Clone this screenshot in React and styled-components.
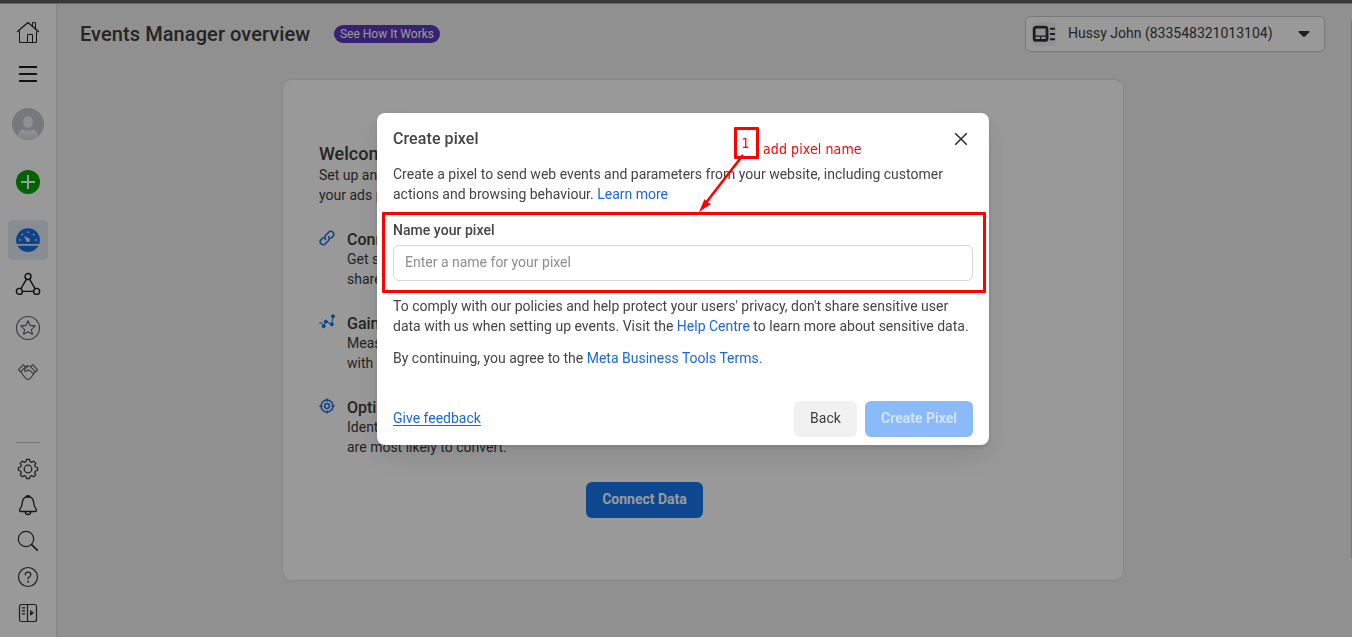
import React from "react";
import styled, { createGlobalStyle } from "styled-components";

const Global = createGlobalStyle`
  * { box-sizing: border-box; }
  html, body { margin: 0; height: 100%; overflow: hidden; }
  body {
    font-family: Roboto, "Liberation Sans", sans-serif;
    font-size: 14px;
    line-height: 20px;
    color: #1c2b33;
  }
  svg { display: block; flex: none; overflow: visible; }
  p, h1, h2, h3 { margin: 0; }
`;

const Page = styled.div`
  height: 637px;
  display: flex;
  flex-direction: column;
  background: #f1f1f1;
  color: #3c3c3c;
`;
const BrowserEdge = styled.div`
  height: 4px;
  flex: none;
  background: #5e5e5e;
  border-bottom: 1px solid #a8a8a8;
`;
const Shell = styled.div`
  flex: 1;
  display: flex;
  min-height: 0;
`;
const Sidebar = styled.nav`
  width: 57px;
  flex: none;
  padding-top: 17px;
  background: #fff;
  border-right: 1px solid #dadada;
  display: flex;
  flex-direction: column;
  align-items: center;
`;
const NavItem = styled.div`
  width: ${(p) => p.$size || 24}px;
  height: ${(p) => p.$size || 24}px;
  margin-top: ${(p) => p.$gap || 0}px;
  flex: none;
  display: flex;
  align-items: center;
  justify-content: center;
  border-radius: 4px;
  background: ${(p) => (p.$active ? "#e3ebf7" : "transparent")};
`;
const NavRule = styled.div`
  width: 24px;
  height: 1px;
  flex: none;
  margin-top: 58px;
  background: #c8c8c8;
`;
const Main = styled.main`
  flex: 1;
  min-width: 0;
  display: flex;
  flex-direction: column;
  align-items: flex-start;
`;
const Header = styled.header`
  width: 100%;
  height: 76px;
  flex: none;
  display: flex;
  align-items: flex-start;
  padding: 12px 27px 0 23px;
`;
const PageTitle = styled.h1`
  font-size: 20px;
  line-height: 36px;
  font-weight: 500;
  letter-spacing: 0.08px;
  white-space: nowrap;
  width: 230px;
`;
const HowPill = styled.span`
  margin: 9px 0 0 24px;
  width: 106px;
  height: 18px;
  border-radius: 9px;
  background: #5a38bf;
  color: #fff;
  font-size: 12px;
  line-height: 18px;
  text-align: center;
  white-space: nowrap;
`;
const AccountSelect = styled.div`
  margin-left: auto;
  width: 300px;
  height: 36px;
  border: 1px solid #cbcbcb;
  border-radius: 5px;
  background: #fff;
  display: flex;
  align-items: center;
  padding: 0 14px 0 6px;
`;
const AccountIcon = styled.span`
  width: 24px;
  height: 24px;
  border-radius: 4px;
  background: #f4f4f4;
`;
const AccountName = styled.span`
  margin-left: 12px;
  padding-bottom: 2px;
  flex: 1;
  white-space: nowrap;
`;
const Card = styled.section`
  width: 840px;
  height: 500px;
  margin-left: 226px;
  flex: none;
  border-radius: 8px;
  background: #fff;
  box-shadow: 0 0 2px rgba(0, 0, 0, 0.22);
  padding: 63px 153px 0 36px;
  display: flex;
  flex-direction: column;
`;
const CardTitle = styled.h2`
  font-size: 18px;
  line-height: 22px;
  font-weight: 500;
`;
const Feature = styled.div`
  display: flex;
  gap: 12px;
  margin-top: 25px;
`;
const FeatureTitle = styled.h3`
  font-size: 16px;
  line-height: 20px;
  height: 19px;
  font-weight: 500;
`;
const PrimaryButton = styled.button`
  flex: none;
  width: ${(p) => p.$width}px;
  height: 36px;
  margin: 0;
  padding: 0 0 2px;
  border: 0;
  border-radius: 6px;
  background: ${(p) => (p.disabled ? "#8bbaf9" : "#1677f1")};
  color: ${(p) => (p.disabled ? "#d1e3fd" : "#fff")};
  font: 700 14px/20px Roboto, sans-serif;
`;
const CardAction = styled.div`
  margin-top: 25px;
  display: flex;
  justify-content: center;
`;
const Backdrop = styled.div`
  position: fixed;
  inset: 0;
  background: rgba(0, 0, 0, 0.4);
  display: flex;
  justify-content: center;
  align-items: flex-start;
  padding: 113px 0 0 14px;
`;
const ScrollThumb = styled.div`
  position: fixed;
  right: 0;
  top: 21px;
  width: 1px;
  height: 537px;
  background: #777;
`;
const Dialog = styled.div`
  width: 612px;
  height: 332px;
  padding: 16px;
  border-radius: 8px;
  background: #fff;
  color: #444;
  box-shadow: 0 12px 28px rgba(0, 0, 0, 0.1), 0 2px 4px rgba(0, 0, 0, 0.12);
  display: flex;
  flex-direction: column;
`;
const DialogHead = styled.div`
  display: flex;
  justify-content: space-between;
  height: 35px;
  padding-right: 5px;
`;
const DialogTitle = styled.h2`
  font-size: 16px;
  line-height: 20px;
  font-weight: 500;
  letter-spacing: 0.08px;
`;
const Text = styled.p`
  margin-top: ${(p) => p.$gap || 0}px;
  white-space: nowrap;
`;
const Link = styled.a`
  color: #1c66d6;
  text-decoration: ${(p) => (p.$underlined ? "underline" : "none")};
  text-underline-offset: 2px;
`;
const Label = styled.label`
  margin-top: 16px;
  font-weight: 500;
  letter-spacing: 0.04px;
`;
const NameInput = styled.input`
  margin: 5px 0 15px;
  width: 100%;
  height: 36px;
  flex: none;
  border: 1px solid #d6d6d6;
  border-radius: 6px;
  padding: 0 11px 2px;
  font: 14px/20px Roboto, sans-serif;
  &::placeholder { color: #8d8d8d; opacity: 1; }
`;
const DialogFoot = styled.div`
  margin-top: auto;
  margin-bottom: -8px;
  display: flex;
  align-items: center;
  gap: 8px;
`;
const Feedback = styled.div`
  margin-right: auto;
  padding-bottom: 2px;
`;
const BackButton = styled.button`
  width: 63px;
  height: 36px;
  padding: 0 0 2px;
  border: 0;
  border-radius: 6px;
  background: #f1f1f1;
  color: #3c3c3c;
  font: 14px/20px Roboto, sans-serif;
`;
const Highlight = styled.div`
  position: fixed;
  left: 382px;
  top: 212px;
  width: 604px;
  height: 81px;
  border: 3px solid #f00;
  border-radius: 1px;
`;
const StepBox = styled.div`
  position: fixed;
  left: 734px;
  top: 127px;
  width: 25px;
  height: 32px;
  border: 3px solid #f00;
  border-radius: 1px;
  color: #f00;
  font: 14px/26px "DejaVu Sans Condensed", "DejaVu Sans", sans-serif;
  font-stretch: condensed;
  padding-right: 2px;
  text-align: center;
`;
const StepText = styled.div`
  position: fixed;
  left: 763px;
  top: 140px;
  color: #f00;
  font: 14px/18px "DejaVu Sans Condensed", "DejaVu Sans", sans-serif;
  font-stretch: condensed;
  letter-spacing: 0.1px;
  white-space: nowrap;
`;
const ArrowLayer = styled.svg`
  position: fixed;
  left: 690px;
  top: 145px;
`;

const Line = ({ size = 24, w = 1.2, color = "#2b2b2b", children }) => (
  <svg width={size} height={size} viewBox={`0 0 ${size} ${size}`} fill="none" stroke={color}
    strokeWidth={w} strokeLinejoin="round" strokeLinecap="round">{children}</svg>
);

const gearPath = (() => {
  const pts = [];
  for (let i = 0; i < 8; i++) {
    [[-15, 7.7], [-9, 9.7], [9, 9.7], [15, 7.7]].forEach(([d, r]) => {
      const a = ((i * 45 + d - 90) * Math.PI) / 180;
      pts.push(`${(12 + r * Math.cos(a)).toFixed(2)} ${(12 + r * Math.sin(a)).toFixed(2)}`);
    });
  }
  return `M${pts.join("L")}Z`;
})();

function SideNav() {
  return (
    <Sidebar>
      <NavItem>
        <Line color="#222" w={1}>
          <path strokeLinejoin="miter" d="M3.5 10.5V21.5H20.5V10.5M11.5 21.5V13.5H16.5V21.5M16.5 5V1.5H19.5V8" />
          <path strokeWidth="1.3" d="M1.5 10.5L12 1.5L22.5 10.5" />
        </Line>
      </NavItem>
      <NavItem $gap={17}>
        <svg width="24" height="24" fill="#1e1e1e"><path d="M3 4h18v2H3zM3 11h18v2H3zM3 18h18v2H3z" /></svg>
      </NavItem>
      <NavItem $gap={22} $size={32}>
        <svg width="32" height="32">
          <defs>
            <clipPath id="face"><circle cx="16" cy="16" r="16" /></clipPath>
            <linearGradient id="body" x1="0" y1="0" x2="0" y2="1">
              <stop offset="0" stopColor="#f2f3f5" /><stop offset="1" stopColor="#d8dade" />
            </linearGradient>
          </defs>
          <g clipPath="url(#face)">
            <rect width="32" height="32" fill="#c5c8cf" />
            <ellipse cx="16" cy="14" rx="5" ry="6" fill="#eff0f2" />
            <path d="M5 32C5 24 9 21.5 11 21.5Q16 24 21 21.5C23 21.5 27 24 27 32Z" fill="url(#body)" />
          </g>
        </svg>
      </NavItem>
      <NavItem $gap={30}>
        <svg width="24" height="24">
          <circle cx="12" cy="12" r="12" fill="#00a400" />
          <path d="M12 5v14M5 12h14" stroke="#fff" strokeWidth="2" />
        </svg>
      </NavItem>
      <NavItem $gap={26} $size={40} $active>
        <svg width="24" height="24">
          <path d="M.6 16A12 12 0 1 1 23.4 16ZM1.5 17.8H22.5A12 12 0 0 1 1.5 17.8Z" fill="#1a6fe8" />
          <g fill="#deeafd">
            <circle cx="4" cy="12" r=".9" /><circle cx="6.3" cy="6.5" r=".9" />
            <circle cx="12" cy="4.2" r=".9" /><circle cx="17.7" cy="6.5" r=".9" />
            <circle cx="20" cy="12" r=".9" />
            <path d="M8 8L13.4 10.4A2 2 0 1 1 10.4 13.3Z" />
          </g>
        </svg>
      </NavItem>
      <NavItem $gap={13}>
        <Line color="#1b1b1b" w={1.4}>
          <circle cx="12" cy="3.5" r="3" /><circle cx="3.4" cy="18.4" r="3" /><circle cx="20.6" cy="18.4" r="3" />
          <path d="M10.5 6.2L4.9 15.6M13.5 6.2L19.1 15.6M6.5 18.4H17.5" />
        </Line>
      </NavItem>
      <NavItem $gap={19}>
        <Line color="#5c6066" w={1.1}>
          <circle cx="12" cy="12" r="11.5" />
          <path d="M12 4.8L14.1 9.4L19.2 9.9L15.4 13.3L16.5 18.3L12 15.7L7.5 18.3L8.6 13.3L4.8 9.9L9.9 9.4Z" />
        </Line>
      </NavItem>
      <NavItem $gap={20}>
        <Line color="#5c6066" w={1.1}>
          <path d="M2.4 9.8L7.2 4.6L9.4 6.6L4.6 12ZM21.6 9.8L16.8 4.6L14.6 6.6L19.4 12Z" />
          <path d="M9.4 6.6Q12 5 14.6 6.6M5.4 11.6C5.4 14.2 7.6 16 9.8 18.3Q12 20.4 14.2 18.3C16.4 16 18.6 14.2 18.6 11.6" />
          <path d="M12 6.2L8.6 9.2Q7.9 11.6 10 11.3L12 9.9Q14.5 10.3 17 13.6" />
        </Line>
      </NavItem>
      <NavRule />
      <NavItem $gap={14}>
        <Line color="#333"><path d={gearPath} /><circle cx="12" cy="12" r="3.8" /></Line>
      </NavItem>
      <NavItem $gap={12}>
        <Line color="#222" w={1.3}>
          <path d="M10 3.9Q10 2.6 12 2.6T14 3.9C17 4.8 17.6 7.5 17.9 11C18.2 14.8 20.5 15.6 20.5 17.3Q20.5 18.5 19 18.5H5Q3.5 18.5 3.5 17.3C3.5 15.6 5.8 14.8 6.1 11C6.4 7.5 7 4.8 10 3.9ZM10 4H14M9.3 19A2.7 2.5 0 0 0 14.7 19" />
        </Line>
      </NavItem>
      <NavItem $gap={12}>
        <Line color="#333"><circle cx="10" cy="10" r="7.7" /><path d="M15.6 15.6L21.2 21.2" strokeWidth="1.8" /></Line>
      </NavItem>
      <NavItem $gap={12}>
        <Line color="#333">
          <circle cx="12" cy="12" r="9.5" />
          <path d="M9.2 9.8Q9.3 7.2 12 7.2T14.8 9.7Q14.8 11 13.2 12T12 14" />
          <circle cx="12" cy="16.7" r=".4" />
        </Line>
      </NavItem>
      <NavItem $gap={12}>
        <Line color="#333">
          <rect x="3.5" y="3.5" width="17" height="17" rx="2" />
          <path d="M11.5 3.5V20.5M6.3 6.8H8.7M6.3 9.8H8.7M6.3 12.8H8.7" />
          <path d="M14.5 9.7V14.3L17.3 12Z" fill="#333" strokeWidth=".8" />
        </Line>
      </NavItem>
    </Sidebar>
  );
}

const blue = "#1a6fe0";
const LinkIcon = () => (
  <Line size={16} w={1.5} color={blue}>
    <path d="M6.5 9.5A3.3 3.3 0 0 1 6.7 5.2L10 1.9A3 3 0 0 1 14.2 6.1L12 8.3M9.5 6.5A3.3 3.3 0 0 1 9.3 10.8L6 14.1A3 3 0 0 1 1.8 9.9L4 7.7" />
  </Line>
);
const TrendIcon = () => (
  <Line size={16} w={1} color={blue}>
    <path d="M.5 9.3L2.5 8.6L4.6 12.2L6.8 7.6L12.8 10.3L14 2.3" />
    <g fill={blue}><circle cx="4.6" cy="12.2" r="1.5" /><circle cx="6.8" cy="7.6" r="1.5" /><circle cx="12.8" cy="10.3" r="1.5" /><circle cx="14" cy="2.3" r="1.5" /></g>
  </Line>
);
const TargetIcon = () => (
  <Line size={16} w={1.5} color={blue}>
    <circle cx="8" cy="8" r="6" /><circle cx="8" cy="8" r="2.4" />
    <path d="M8 .9V3M8 13V15.1M.9 8H3M13 8H15.1" />
  </Line>
);

export default function App() {
  return (
    <>
      <Global />
      <Page>
        <BrowserEdge />
        <Shell>
          <SideNav />
          <Main>
            <Header>
              <PageTitle>Events Manager overview</PageTitle>
              <HowPill>See How It Works</HowPill>
              <AccountSelect>
                <AccountIcon>
                  <svg width="24" height="24" fill="none" stroke="#303338" strokeWidth="2.8">
                    <rect x="2.2" y="5.2" width="12.8" height="13.2" rx="2" />
                    <path d="M3 14.2H14M8.6 14V18" strokeWidth="1.3" />
                    <path d="M18 6.8H23M18 12H23M18 17.2H23" strokeWidth="2" />
                  </svg>
                </AccountIcon>
                <AccountName>Hussy John (833548321013104)</AccountName>
                <svg width="12" height="8" fill="#303338"><path d="M.8 1H11.2Q12 1.4 11.3 2.2L7 6.6Q6 7.4 5 6.6L.7 2.2Q0 1.4.8 1Z" /></svg>
              </AccountSelect>
            </Header>
            <Card>
              <CardTitle>Welcome</CardTitle>
              <Text>Set up and<br />your ads p</Text>
              <Feature>
                <LinkIcon />
                <div><FeatureTitle>Connect</FeatureTitle><Text>Get s<br />share</Text></div>
              </Feature>
              <Feature>
                <TrendIcon />
                <div><FeatureTitle>Gain</FeatureTitle><Text>Measure<br />with y</Text></div>
              </Feature>
              <Feature>
                <TargetIcon />
                <div><FeatureTitle>Optimise</FeatureTitle><Text>Identify<br />are most likely to convert.</Text></div>
              </Feature>
              <CardAction><PrimaryButton $width={117}>Connect Data</PrimaryButton></CardAction>
            </Card>
          </Main>
        </Shell>
      </Page>
      <Backdrop>
        <Dialog role="dialog">
          <DialogHead>
            <DialogTitle>Create pixel</DialogTitle>
            <svg width="14" height="20" fill="none" stroke="#303030" strokeWidth="1.6"><path d="M1.2 4.2L12.8 15.8M12.8 4.2L1.2 15.8" /></svg>
          </DialogHead>
          <Text>
            Create a pixel to send web events and parameters from your website, including customer<br />
            actions and browsing behaviour. <Link>Learn more</Link>
          </Text>
          <Label htmlFor="pixel-name">Name your pixel</Label>
          <NameInput id="pixel-name" placeholder="Enter a name for your pixel" />
          <Text>
            To comply with our policies and help protect your users' privacy, don't share sensitive user<br />
            data with us when setting up events. Visit the <Link>Help Centre</Link> to learn more about sensitive data.
          </Text>
          <Text $gap={12}>By continuing, you agree to the <Link>Meta Business Tools Terms.</Link></Text>
          <DialogFoot>
            <Feedback><Link $underlined>Give feedback</Link></Feedback>
            <BackButton>Back</BackButton>
            <PrimaryButton $width={108} disabled>Create Pixel</PrimaryButton>
          </DialogFoot>
        </Dialog>
      </Backdrop>
      <ScrollThumb />
      <Highlight />
      <StepBox>1</StepBox>
      <StepText>add pixel name</StepText>
      <ArrowLayer width="60" height="70">
        <path d="M53 10L15 59" stroke="#f00" strokeWidth="2.6" />
        <path d="M9 67L14.5 54L17 57L21 59Z" fill="#f00" />
      </ArrowLayer>
    </>
  );
}
